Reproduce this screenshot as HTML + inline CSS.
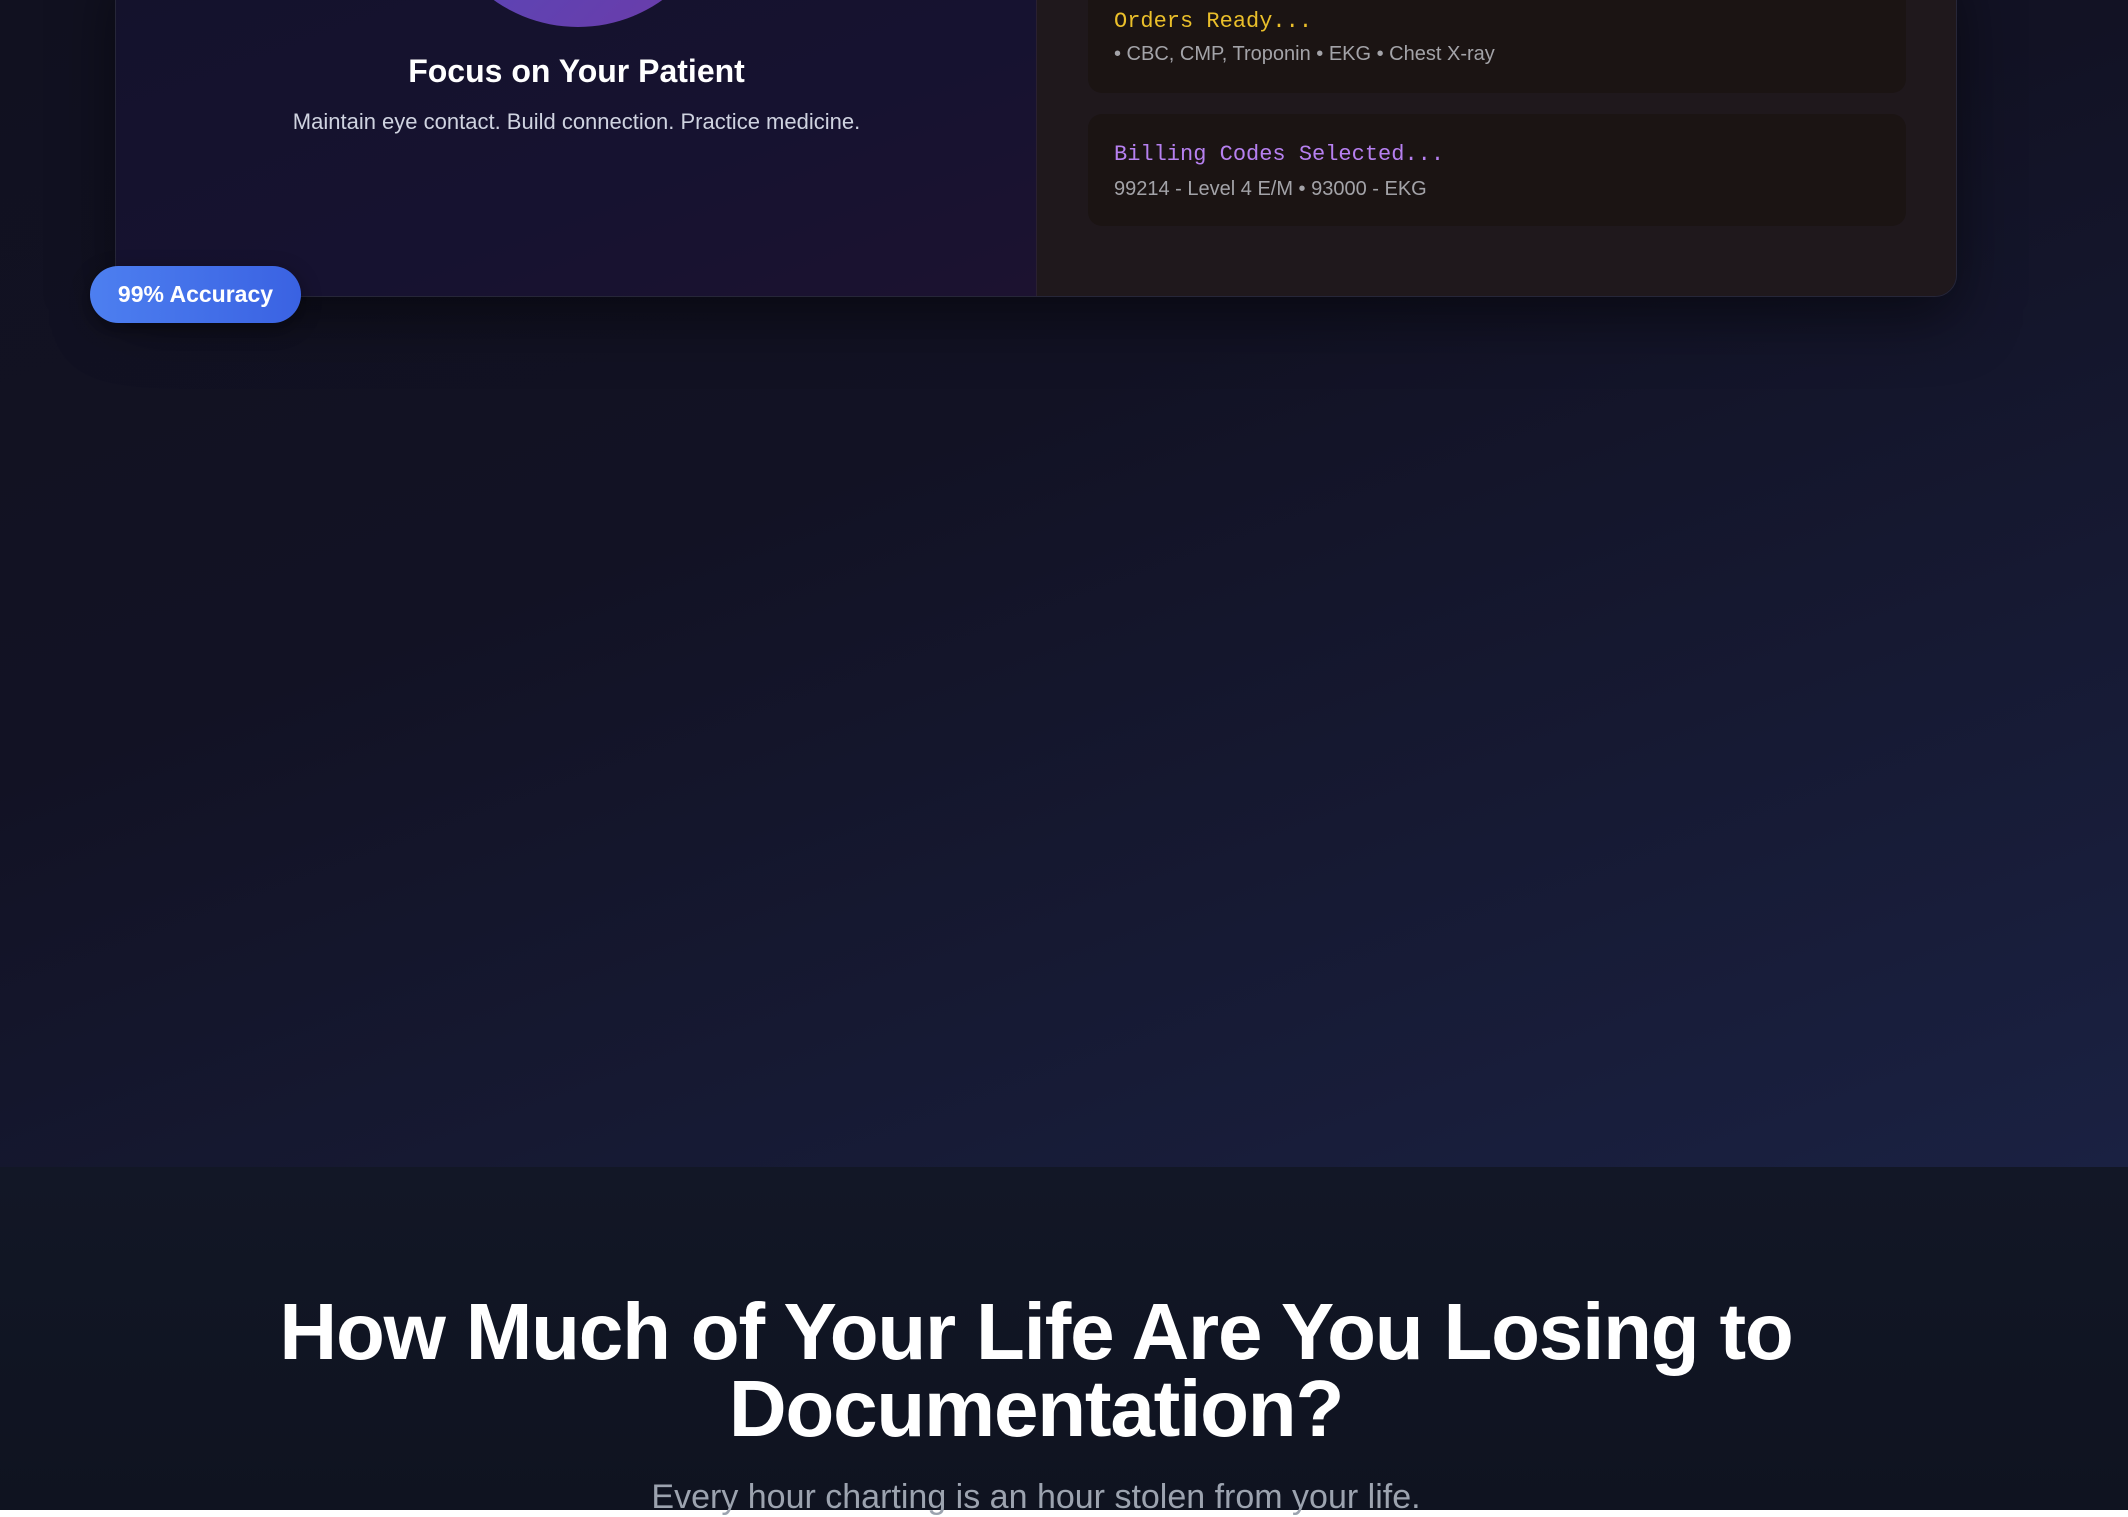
<!DOCTYPE html>
<html><head><meta charset="utf-8"><style>
*{margin:0;padding:0;box-sizing:border-box}
html,body{width:2128px;height:1510px;overflow:hidden;font-family:"Liberation Sans",sans-serif}
.hero{position:absolute;left:0;top:0;width:2128px;height:1167px;background:linear-gradient(160deg,#111120 0%,#121224 40%,#1a2142 100%)}
.card{position:absolute;left:115px;top:-40px;width:1842px;height:337px;border-radius:0 0 22px 22px;overflow:hidden;border:1px solid #262638;box-shadow:0 20px 60px rgba(0,0,0,.5)}
.left{position:absolute;left:0;top:0;width:921px;height:100%;background:linear-gradient(160deg,#14122c 0%,#161230 60%,#1c1230 100%);border-right:1px solid #2a2030}
.right{position:absolute;left:921px;top:0;right:0;height:100%;background:#1f181c}
.circle{position:absolute;left:317px;top:-224px;width:290px;height:290px;border-radius:50%;background:linear-gradient(135deg,#4b4fc0,#6d3aa8)}
.h{position:absolute;left:0;width:921px;text-align:center;color:#fff;font-weight:bold;font-size:32px;top:91px}
.s{position:absolute;left:0;width:921px;text-align:center;color:#cfd3e0;font-size:22px;top:147px}
.ic{position:absolute;left:51px;width:818px;background:#1b1413;border-radius:14px}
.mono{font-family:"Liberation Mono",monospace;font-size:22px;position:absolute;left:26px}
.sub{position:absolute;left:26px;color:#a3a3a8;font-size:20px}
.badge{position:absolute;left:90px;top:266px;width:211px;height:57px;border-radius:29px;background:linear-gradient(90deg,#4d7ff0,#3a62e2);color:#fff;font-weight:bold;font-size:23px;line-height:57px;text-align:center;box-shadow:0 6px 20px rgba(0,0,0,.4)}
.sec{position:absolute;left:0;top:1167px;width:2128px;height:343px;background:linear-gradient(180deg,#121726,#0f1320)}
.t{position:absolute;left:0;width:2072px;text-align:center;color:#fff;font-weight:bold;font-size:80px;line-height:77px;top:126px;letter-spacing:-1.2px}
.ts{position:absolute;left:0;width:2072px;text-align:center;color:#9ca3af;font-size:34px;top:311px}
</style></head><body>
<div class="hero">
 <div class="card">
  <div class="left">
   <div class="circle"></div>
   <div class="h" style="top:92px">Focus on Your Patient</div>
   <div class="s" style="top:148px">Maintain eye contact. Build connection. Practice medicine.</div>
  </div>
  <div class="right">
   <div class="ic" style="top:0;height:132px">
    <div class="mono" style="top:48px;color:#eabf2a">Orders Ready...</div>
    <div class="sub" style="top:82px">• CBC, CMP, Troponin • EKG • Chest X-ray</div>
   </div>
   <div class="ic" style="top:153px;height:112px">
    <div class="mono" style="top:28px;color:#b680f0">Billing Codes Selected...</div>
    <div class="sub" style="top:64px">99214 - Level 4 E/M • 93000 - EKG</div>
   </div>
  </div>
 </div>
 <div class="badge">99% Accuracy</div>
</div>
<div class="sec">
 <div class="t">How Much of Your Life Are You Losing to<br>Documentation?</div>
 <div class="ts">Every hour charting is an hour stolen from your life.</div>
</div>
</body></html>
